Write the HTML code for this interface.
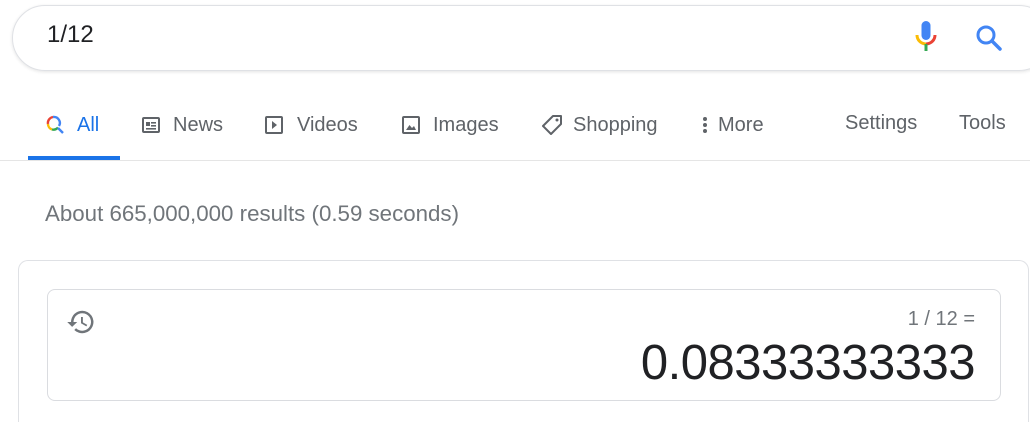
<!DOCTYPE html>
<html><head><style>
*{margin:0;padding:0;box-sizing:border-box}
html,body{width:1030px;height:422px;overflow:hidden}
body{background:#fff;font-family:"Liberation Sans",Arial,sans-serif;position:relative}
.a{position:absolute}
.tab{position:absolute;top:113px;font-size:20px;color:#5f6368;line-height:24px;white-space:nowrap}
</style></head><body>
<div class="a" style="left:0;top:0;width:1030px;height:422px;overflow:hidden">
<div class="a" style="left:12px;top:5px;width:1040px;height:66px;border:1px solid #dfe1e5;border-radius:33px;box-shadow:0 1px 3px rgba(32,33,36,.12)"></div>
<div class="a" style="left:47px;top:21px;font-size:24px;color:#202124">1/12</div>
<svg class="a" style="left:912px;top:19px" width="28" height="36" viewBox="0 0 28 36">
<rect x="9.5" y="2" width="9" height="19" rx="4.5" fill="#4285f4"/>
<path d="M5 16 a9 9 0 0 0 9 9" stroke="#fbbc05" stroke-width="3" fill="none"/>
<path d="M14 25 a9 9 0 0 0 9 -9" stroke="#ea4335" stroke-width="3" fill="none"/>
<rect x="12.5" y="25" width="3" height="7" fill="#34a853"/>
</svg>
<svg class="a" style="left:974px;top:23px" width="30" height="30" viewBox="0 0 30 30">
<circle cx="12" cy="12" r="8" stroke="#4285f4" stroke-width="3" fill="none"/>
<path d="M18 18 L26 26" stroke="#4285f4" stroke-width="3.5" stroke-linecap="round"/>
</svg>
<svg class="a" style="left:45px;top:114px" width="22" height="22" viewBox="0 0 22 22">
<path d="M8 3 a6 6 0 0 0 -5 7" stroke="#ea4335" stroke-width="2.4" fill="none"/>
<path d="M3 10 a6 6 0 0 0 4 5.5" stroke="#fbbc05" stroke-width="2.4" fill="none"/>
<path d="M7 15.5 a6 6 0 0 0 6 -2" stroke="#34a853" stroke-width="2.4" fill="none"/>
<path d="M8 3 a6 6 0 0 1 6 9" stroke="#4285f4" stroke-width="2.4" fill="none"/>
<path d="M13 14 L18 19" stroke="#4285f4" stroke-width="2.4"/>
</svg>
<div class="tab" style="left:77px;color:#1a73e8">All</div>
<div class="a" style="left:28px;top:156px;width:92px;height:4px;background:#1a73e8"></div>
<div class="a" style="left:0;top:160px;width:1030px;height:1px;background:#e5e5e5"></div>
<svg class="a" style="left:141px;top:115px" width="20" height="20" viewBox="0 0 20 20"><rect x="2" y="3" width="16" height="14" rx="1" stroke="#5f6368" stroke-width="2" fill="none"/><rect x="5" y="7" width="4" height="4" fill="#5f6368"/><rect x="10" y="7" width="5" height="1.6" fill="#5f6368"/><rect x="10" y="10" width="5" height="1.6" fill="#5f6368"/><rect x="5" y="13" width="10" height="1.6" fill="#5f6368"/></svg>
<div class="tab" style="left:173px">News</div>
<svg class="a" style="left:264px;top:115px" width="20" height="20" viewBox="0 0 20 20"><rect x="2" y="2" width="16" height="16" rx="1" stroke="#5f6368" stroke-width="2" fill="none"/><path d="M8 6 L13 10 L8 14Z" fill="#5f6368"/></svg>
<div class="tab" style="left:297px">Videos</div>
<svg class="a" style="left:401px;top:115px" width="20" height="20" viewBox="0 0 20 20"><rect x="2" y="2" width="16" height="16" rx="1" stroke="#5f6368" stroke-width="2" fill="none"/><path d="M5 15 L8.5 10 L11 13 L13 11 L15 15Z" fill="#5f6368"/></svg>
<div class="tab" style="left:433px">Images</div>
<svg class="a" style="left:540px;top:113px" width="24" height="24" viewBox="0 0 24 24"><path d="M13 3 L21 3 L21 11 L11 21 L3 13Z" stroke="#5f6368" stroke-width="2" fill="none" stroke-linejoin="round"/><circle cx="17" cy="7" r="1.5" fill="#5f6368"/></svg>
<div class="tab" style="left:573px">Shopping</div>
<svg class="a" style="left:700px;top:115px" width="10" height="20" viewBox="0 0 10 20"><circle cx="5" cy="4" r="2" fill="#5f6368"/><circle cx="5" cy="10" r="2" fill="#5f6368"/><circle cx="5" cy="16" r="2" fill="#5f6368"/></svg>
<div class="tab" style="left:718px">More</div>
<div class="tab" style="left:845px;top:111px">Settings</div>
<div class="tab" style="left:959px;top:111px">Tools</div>
<div class="a" style="left:45px;top:201px;font-size:22.3px;color:#70757a;white-space:nowrap">About 665,000,000 results (0.59 seconds)</div>
<div class="a" style="left:18px;top:260px;width:1011px;height:162px;border:1px solid #dfe1e5;border-bottom:none;border-radius:10px 10px 0 0"></div>
<div class="a" style="left:47px;top:289px;width:954px;height:112px;border:1px solid #dadce0;border-radius:8px"></div>
<svg class="a" style="left:66px;top:307px" width="30" height="30" viewBox="0 0 24 24"><path fill="#70757a" d="M13 3a9 9 0 0 0-9 9H1l3.9 3.9L9 12H6a7 7 0 1 1 2.05 4.95l-1.42 1.42A9 9 0 1 0 13 3zm-1 5v5l4.28 2.54.72-1.21-3.5-2.08V8H12z"/></svg>
<div class="a" style="right:55px;top:308px;font-size:20px;color:#70757a;white-space:nowrap">1 / 12 =</div>
<div class="a" style="right:55px;top:335px;font-size:49px;color:#202124;letter-spacing:-0.5px">0.08333333333</div>
</div>
</body></html>
